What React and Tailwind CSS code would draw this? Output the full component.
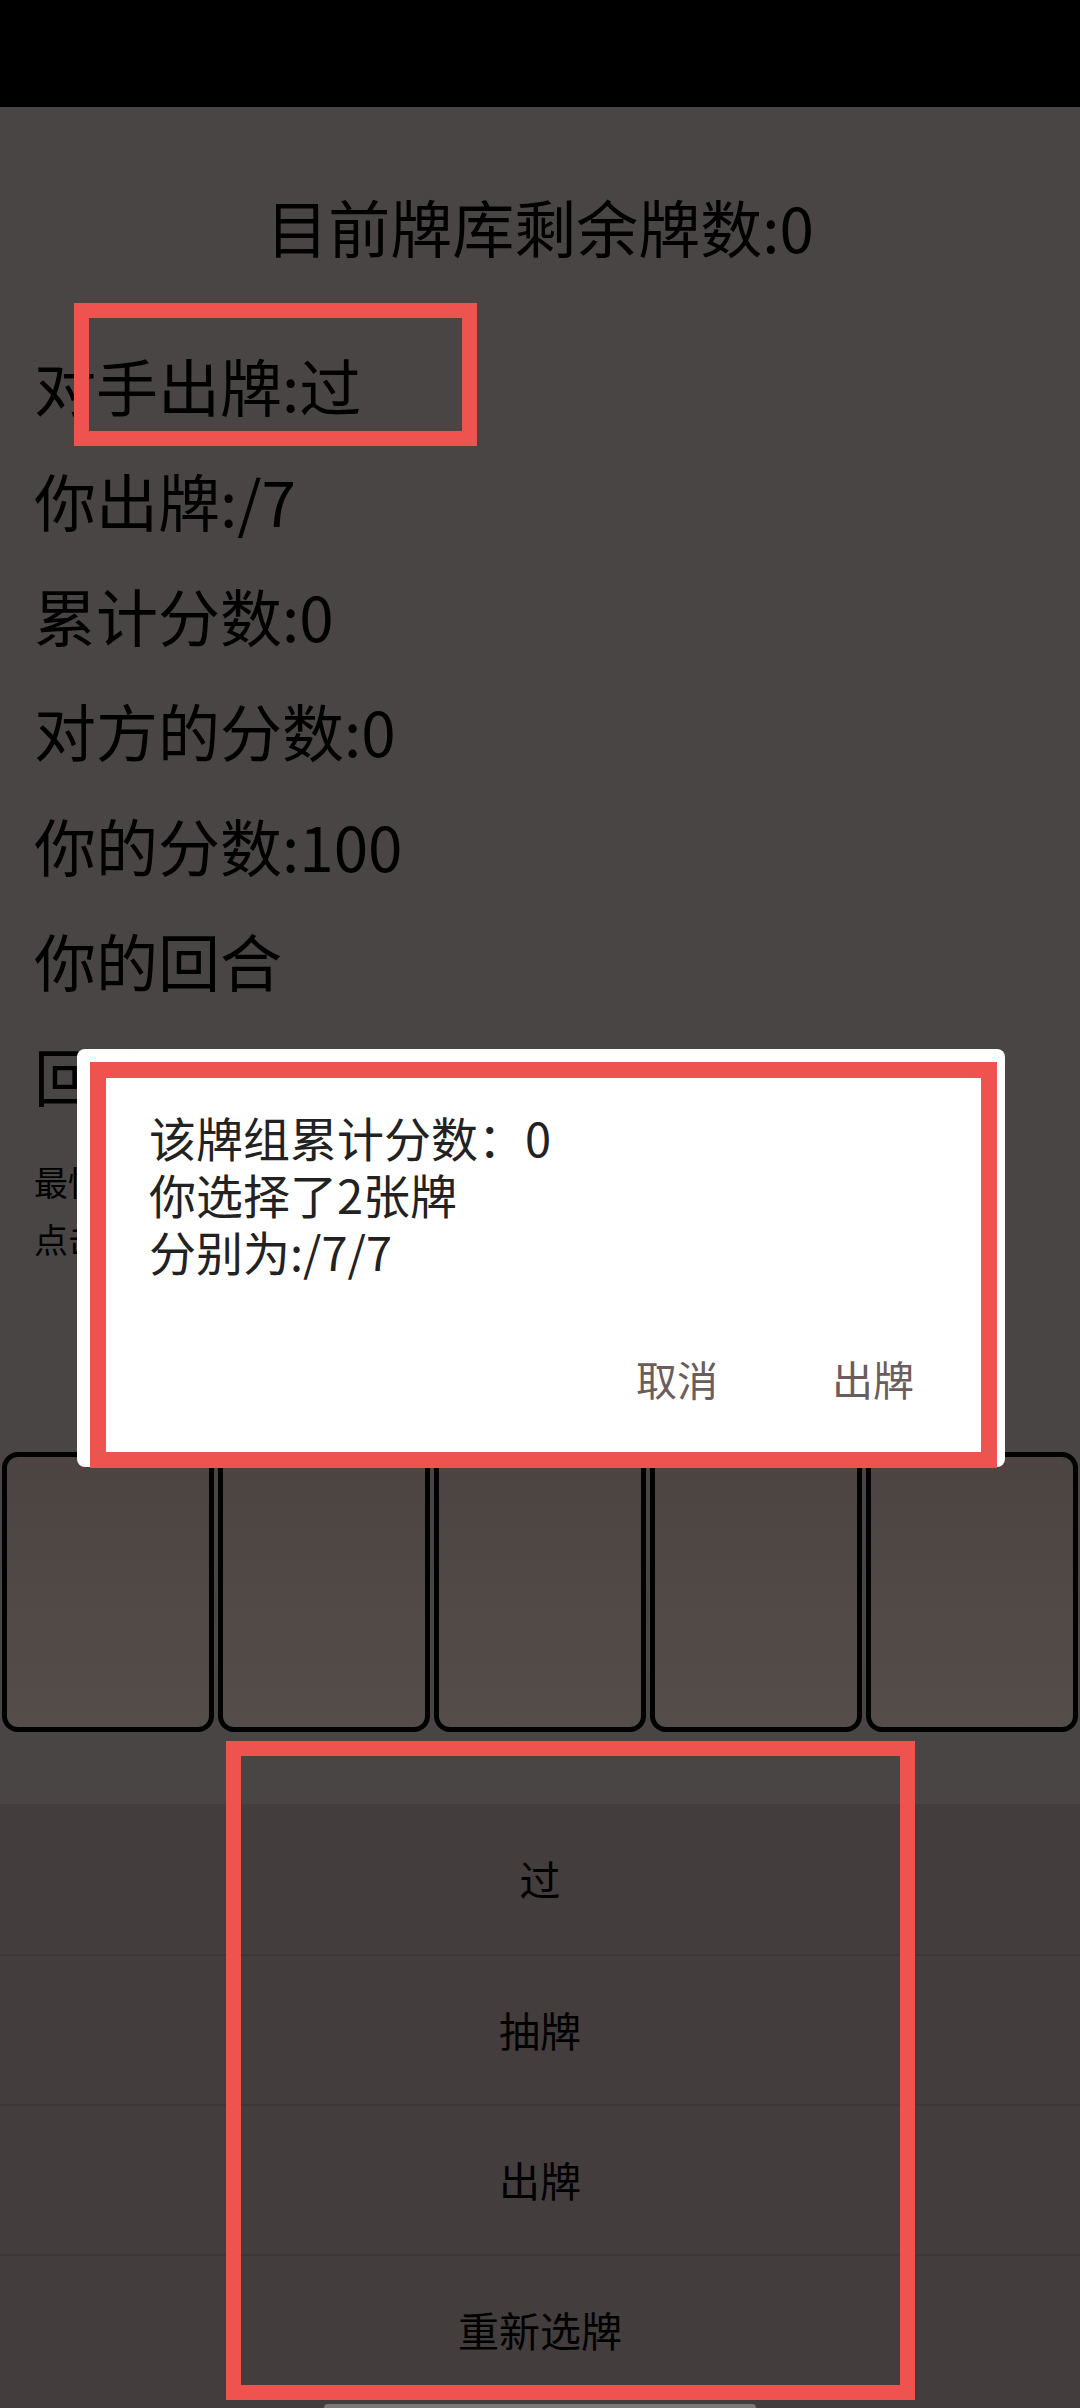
import React from "react";

const font = { fontFamily: '"Noto Sans CJK SC", "Noto Sans", sans-serif' };

const infoLines = ["对手出牌:过", "你出牌:/7", "累计分数:0", "对方的分数:0", "你的分数:100", "你的回合", "回合数:1"];
const actions = ["过", "抽牌", "出牌", "重新选牌"];

const Card = () => (
  <div className="flex-1 h-[280px] rounded-[16px] border-[5px] border-black bg-gradient-to-b from-[#4c4442] to-[#554d4a]" />
);

const Dialog = () => (
  <div className="absolute left-[77px] top-[1049px] w-[928px] h-[418px] bg-white rounded-[8px] flex flex-col pl-[72px] pr-[91px] pt-[59px]">
    <div className="text-[47px] leading-[57px] text-[#222222]">
      <p>该牌组累计分数：0</p>
      <p>你选择了2张牌</p>
      <p>分别为:/7/7</p>
    </div>
    <div className="flex justify-end gap-[114px] mt-[74px] text-[41px] leading-[50px] text-[#6b5d5e]">
      <button>取消</button>
      <button>出牌</button>
    </div>
  </div>
);

export default function App() {
  return (
    <div className="relative w-[1080px] h-[2408px] overflow-hidden bg-[#4a4545] flex flex-col" style={font}>
      <div className="h-[107px] bg-black shrink-0" />

      <div className="flex flex-col">
        <h1 className="text-center text-[62px] leading-[74px] text-black mt-[82px]">目前牌库剩余牌数:0</h1>
        <div className="flex flex-col pl-[34px] mt-[65px]">
          {infoLines.map((line) => (
            <div key={line} className="h-[115px] flex items-center text-[62px] text-black whitespace-nowrap">
              {line}
            </div>
          ))}
        </div>
        <div className="pl-[34px] mt-[20px] text-[34px] leading-[57px] text-black">
          <p>最快出完手牌获胜</p>
          <p>点击卡牌选择</p>
        </div>
        <div className="flex gap-[4px] px-[2px] mt-[185px]">
          <Card />
          <Card />
          <Card />
          <Card />
          <Card />
        </div>
      </div>

      <div className="mt-[72px] flex-1 flex flex-col bg-[#433d3d]">
        {actions.map((label, i) => (
          <button
            key={label}
            className={`h-[150px] flex items-center justify-center text-[41px] text-black ${i > 0 ? "border-t-2 border-[#3d3737]" : ""}`}
          >
            {label}
          </button>
        ))}
        <div className="mt-auto mx-auto w-[432px] h-[8px] rounded-t-[4px] bg-[#7a7878]" />
      </div>

      <Dialog />

      {/* red annotation frames */}
      <div className="absolute left-[74px] top-[303px] w-[403px] h-[143px] border-[15px] border-[#ef5350]" />
      <div className="absolute left-[90px] top-[1062px] w-[907px] h-[406px] border-[16px] border-[#ef5350]" />
      <div className="absolute left-[226px] top-[1741px] w-[689px] h-[659px] border-[15px] border-[#ef5350]" />
    </div>
  );
}
